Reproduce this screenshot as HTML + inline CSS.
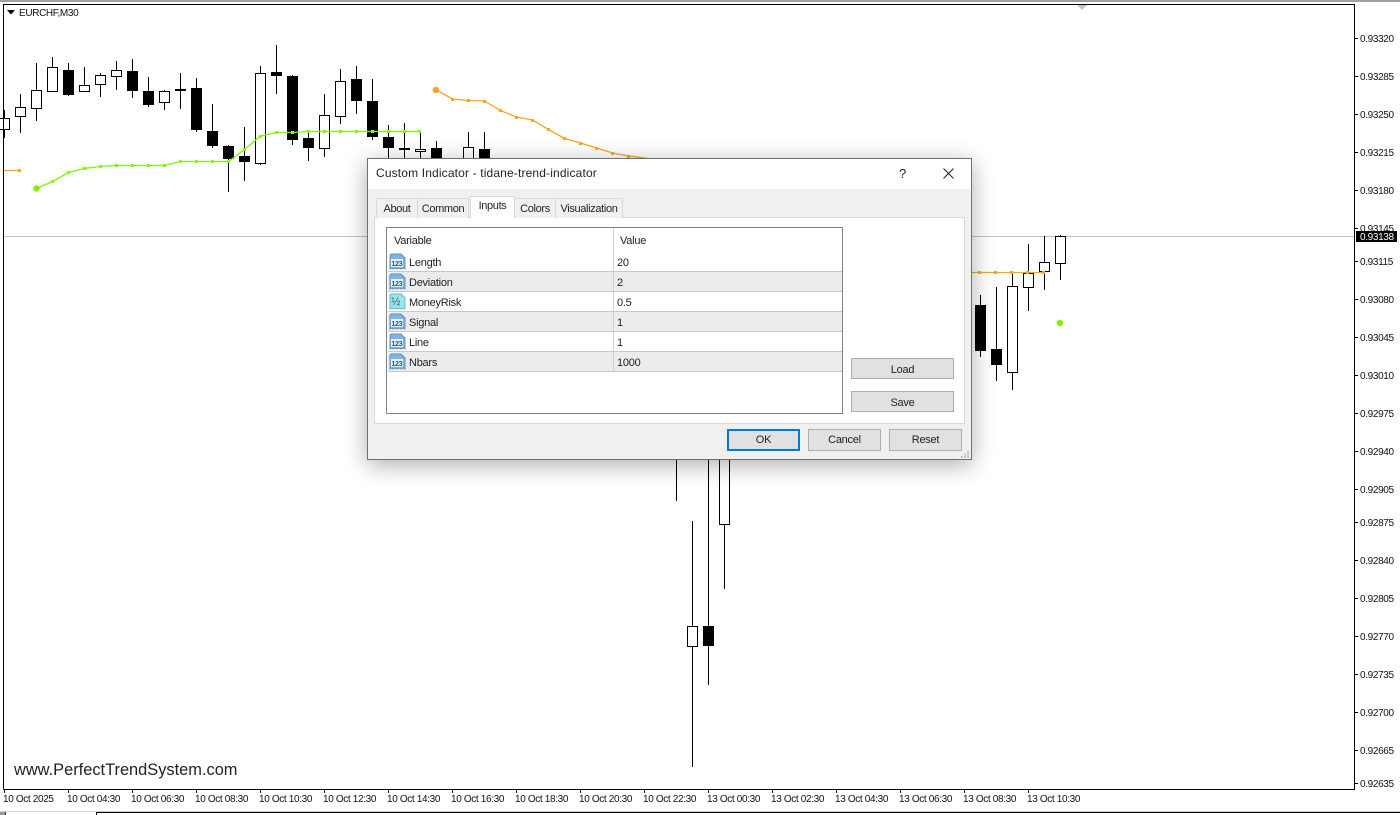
<!DOCTYPE html>
<html><head><meta charset="utf-8">
<style>
html,body{margin:0;padding:0;background:#fff;width:1400px;height:815px;overflow:hidden}
body{position:relative;font-family:"Liberation Sans",sans-serif}
svg.c{position:absolute;left:0;top:0}
.ax text{font:10px "Liberation Sans",sans-serif;letter-spacing:-.35px;fill:#111}
#d{position:absolute;left:367px;top:158px;width:603px;height:300px;background:#f0f0f0;border:1px solid #707070;box-shadow:0 5px 22px rgba(0,0,0,.32);font-size:11px;letter-spacing:-.25px;color:#222}
#d>*{position:absolute;box-sizing:border-box}
.ti{left:0;top:0;width:603px;height:30px;background:#fff}
.tt{left:8px;top:7px;font-size:12px;letter-spacing:.15px;white-space:nowrap}
.pn{left:6px;top:58px;width:591px;height:207px;background:#fff;border:1px solid #d9d9d9}
.tb{top:39px;height:20px;background:#f0f0f0;border:1px solid #d9d9d9;border-bottom:0;text-align:center;line-height:20px;white-space:nowrap;letter-spacing:-.35px}
.tb.a{top:37px;height:22px;background:#fff;z-index:2;line-height:18px}
.ls{left:18px;top:68px;width:457px;height:187px;background:#fff;border:1px solid #828282}
.ls>*{position:absolute;box-sizing:border-box}
.r{left:1px;width:454px;height:20px;border-bottom:1px solid #c8c8c8;line-height:19px}
.r.g{background:#ececec}
.r span{position:absolute;top:2px;white-space:nowrap}
.r .n{left:21px}.r .v{left:229px}
.r svg{position:absolute;left:1px;top:1px}
.vl{left:226px;top:0;width:1px;height:144px;background:#d0d0d0}
.bt{background:#e1e1e1;border:1px solid #adadad;text-align:center;line-height:21px;height:22px;width:73px;top:270px;white-space:nowrap}
</style></head><body>

<svg class="c" width="1400" height="815" viewBox="0 0 1400 815" shape-rendering="crispEdges">
<rect width="1400" height="2" fill="#a0a0a0"/>
<rect x="0" y="811" width="1400" height="1" fill="#d0d0d0"/>
<rect x="96" y="812" width="1304" height="1" fill="#000"/>
<rect x="96" y="812" width="1" height="3" fill="#000"/>
<rect x="0" y="812" width="5" height="3" fill="#999"/>
<rect x="5" y="812" width="1" height="3" fill="#333"/>
<path d="M1076 4h12l-6 6z" fill="#c4c4c4" shape-rendering="auto"/>
<rect x="3" y="236" width="1351" height="1" fill="#c0c0c0"/>
<path stroke="#000" fill="none" d="M4.5 110V138M20.5 94V133M36.5 63V121M52.5 57V91M68.5 63V96M84.5 67V91M100.5 73V97M116.5 61V90M132.5 59V98M148.5 77V107M164.5 90V110M180.5 73V109M196.5 78V132M212.5 104V148M228.5 145V192M244.5 127V181M260.5 66V165M276.5 45V94M292.5 75V145M308.5 130V161M324.5 94V157M340.5 69V124M356.5 66V114M372.5 79V140M388.5 125V165M404.5 123V165M420.5 133V165M436.5 141V165M468.5 132V165M484.5 132V165M676.5 455V501M692.5 521V767M708.5 455V685M724.5 455V589M980.5 295V357M996.5 287V381M1012.5 274V390M1028.5 244V311M1044.5 236V290M1060.5 235V280"/>
<g fill="#000">
<rect x="63" y="70" width="11" height="25"/><rect x="127" y="71" width="11" height="20"/><rect x="143" y="91" width="11" height="14"/><rect x="175" y="89" width="11" height="2"/><rect x="191" y="88" width="11" height="42"/><rect x="207" y="131" width="11" height="15"/><rect x="223" y="146" width="11" height="13"/><rect x="239" y="156" width="11" height="6"/><rect x="271" y="72" width="11" height="4"/><rect x="287" y="76" width="11" height="64"/><rect x="303" y="138" width="11" height="10"/><rect x="351" y="79" width="11" height="22"/><rect x="367" y="101" width="11" height="36"/><rect x="383" y="137" width="11" height="11"/><rect x="399" y="148" width="11" height="2"/><rect x="431" y="148" width="11" height="14"/><rect x="479" y="149" width="11" height="12"/><rect x="703" y="626" width="11" height="20"/><rect x="975" y="305" width="11" height="46"/><rect x="991" y="349" width="11" height="16"/>
</g>
<g fill="#fff" stroke="#000">
<rect x="-.5" y="118.500" width="10" height="11"/><rect x="15.500" y="107.500" width="10" height="9"/><rect x="31.500" y="90.500" width="10" height="18"/><rect x="47.500" y="67.500" width="10" height="24"/><rect x="79.500" y="85.500" width="10" height="6"/><rect x="95.500" y="75.500" width="10" height="9"/><rect x="111.500" y="70.500" width="10" height="6"/><rect x="159.500" y="91.500" width="10" height="11"/><rect x="255.500" y="73.500" width="10" height="90"/><rect x="319.500" y="115.500" width="10" height="33"/><rect x="335.500" y="81.500" width="10" height="35"/><rect x="415.500" y="149.500" width="10" height="2"/><rect x="463.500" y="147.500" width="10" height="14"/><rect x="687.500" y="626.500" width="10" height="20"/><rect x="719.500" y="455.500" width="10" height="69"/><rect x="1007.500" y="286.500" width="10" height="86"/><rect x="1023.500" y="273.500" width="10" height="14"/><rect x="1039.500" y="262.500" width="10" height="9"/><rect x="1055.500" y="236.500" width="10" height="27"/>
</g>
<g shape-rendering="auto" fill="none" stroke-width="1.300">
<path stroke="#85ee10" d="M36.500 188.500L52.500 181.500L68.500 172.500L84.500 168.500L100.500 166.500L116.500 165.500H164.500L180.500 161.500H228.500L244.500 149.500L260.500 136L276.500 132.500H292.500L308.500 131.500H420"/>
<path stroke="#f0a81e" d="M4 170.500H20.500M436.500 90L452.500 99L468.500 100.500L484.500 101L500.500 110.500L516.500 117L532.500 120L548.500 129.500L564.500 138.500L580.500 143L596.500 148L612.500 153L628.500 156L648 158.500M972 272.500H1044.500"/>
</g>
<g fill="#80ff00">
<rect x="51" y="180" width="3" height="3"/><rect x="67" y="171" width="3" height="3"/><rect x="83" y="167" width="3" height="3"/><rect x="99" y="165" width="3" height="3"/><rect x="115" y="164" width="3" height="3"/><rect x="131" y="164" width="3" height="3"/><rect x="147" y="164" width="3" height="3"/><rect x="163" y="164" width="3" height="3"/><rect x="179" y="160" width="3" height="3"/><rect x="195" y="160" width="3" height="3"/><rect x="211" y="160" width="3" height="3"/><rect x="227" y="160" width="3" height="3"/><rect x="243" y="148" width="3" height="3"/><rect x="259" y="135" width="3" height="3"/><rect x="275" y="131" width="3" height="3"/><rect x="291" y="131" width="3" height="3"/><rect x="307" y="130" width="3" height="3"/><rect x="323" y="130" width="3" height="3"/><rect x="339" y="130" width="3" height="3"/><rect x="355" y="130" width="3" height="3"/><rect x="371" y="130" width="3" height="3"/><rect x="387" y="130" width="3" height="3"/><rect x="403" y="130" width="3" height="3"/><rect x="418" y="130" width="3" height="3"/>
</g>
<g fill="#f5a623">
<rect x="18" y="169" width="3" height="3"/><rect x="451" y="98" width="3" height="3"/><rect x="467" y="99" width="3" height="3"/><rect x="483" y="100" width="3" height="3"/><rect x="499" y="109" width="3" height="3"/><rect x="515" y="116" width="3" height="3"/><rect x="531" y="119" width="3" height="3"/><rect x="547" y="128" width="3" height="3"/><rect x="563" y="137" width="3" height="3"/><rect x="579" y="142" width="3" height="3"/><rect x="595" y="147" width="3" height="3"/><rect x="611" y="152" width="3" height="3"/><rect x="627" y="155" width="3" height="3"/><rect x="978" y="271" width="3" height="3"/><rect x="994" y="271" width="3" height="3"/><rect x="1010" y="271" width="3" height="3"/><rect x="1026" y="271" width="3" height="3"/><rect x="1042" y="271" width="3" height="3"/>
</g>
<g shape-rendering="auto">
<circle cx="36.500" cy="188.500" r="3.200" fill="#80f000"/>
<circle cx="1060" cy="323" r="3.200" fill="#80f000"/>
<circle cx="436" cy="90" r="3.200" fill="#f5a623"/>
</g>
<!-- frame -->
<path fill="none" stroke="#000" d="M3.500 789.500V4.500H1354.500V789.500H3.500"/>
<path stroke="#000" d="M1354 38.500h4M1354 76.500h4M1354 114.500h4M1354 152.500h4M1354 190.500h4M1354 228.500h4M1354 261.500h4M1354 299.500h4M1354 337.500h4M1354 375.500h4M1354 413.500h4M1354 451.500h4M1354 489.500h4M1354 522.500h4M1354 560.500h4M1354 598.500h4M1354 636.500h4M1354 674.500h4M1354 712.500h4M1354 750.500h4M1354 783.500h4M4.500 789v4M68.500 789v4M132.500 789v4M196.500 789v4M260.500 789v4M324.500 789v4M388.500 789v4M452.500 789v4M516.500 789v4M580.500 789v4M644.500 789v4M708.500 789v4M772.500 789v4M836.500 789v4M900.500 789v4M964.500 789v4M1028.500 789v4"/>
<path d="M7 10h8l-4 4.500z" fill="#000" shape-rendering="auto"/>
<g class="ax">
<text x="19" y="16">EURCHF,M30</text>
<text x="1360" y="42">0.93320</text><text x="1360" y="80">0.93285</text><text x="1360" y="118">0.93250</text><text x="1360" y="156">0.93215</text><text x="1360" y="194">0.93180</text><text x="1360" y="232">0.93145</text><text x="1360" y="265">0.93115</text><text x="1360" y="303">0.93080</text><text x="1360" y="341">0.93045</text><text x="1360" y="379">0.93010</text><text x="1360" y="417">0.92975</text><text x="1360" y="455">0.92940</text><text x="1360" y="493">0.92905</text><text x="1360" y="526">0.92875</text><text x="1360" y="564">0.92840</text><text x="1360" y="602">0.92805</text><text x="1360" y="640">0.92770</text><text x="1360" y="678">0.92735</text><text x="1360" y="716">0.92700</text><text x="1360" y="754">0.92665</text><text x="1360" y="787">0.92635</text>
<rect x="1356" y="231" width="41" height="11" fill="#000"/>
<text x="1360" y="240" style="fill:#fff">0.93138</text>
<text x="3" y="802">10 Oct 2025</text><text x="67" y="802">10 Oct 04:30</text><text x="131" y="802">10 Oct 06:30</text><text x="195" y="802">10 Oct 08:30</text><text x="259" y="802">10 Oct 10:30</text><text x="323" y="802">10 Oct 12:30</text><text x="387" y="802">10 Oct 14:30</text><text x="451" y="802">10 Oct 16:30</text><text x="515" y="802">10 Oct 18:30</text><text x="579" y="802">10 Oct 20:30</text><text x="643" y="802">10 Oct 22:30</text><text x="707" y="802">13 Oct 00:30</text><text x="771" y="802">13 Oct 02:30</text><text x="835" y="802">13 Oct 04:30</text><text x="899" y="802">13 Oct 06:30</text><text x="963" y="802">13 Oct 08:30</text><text x="1027" y="802">13 Oct 10:30</text>
</g>
<text x="14" y="775" font-family="Liberation Sans" font-size="16.400" fill="#222" shape-rendering="auto">www.PerfectTrendSystem.com</text>
</svg>

<div id="d">
<div class="ti"></div>
<div class="tt">Custom Indicator - tidane-trend-indicator</div>
<div style="left:531px;top:7px;font-size:13px">?</div>
<svg style="left:575px;top:9px" width="11" height="11" viewBox="0 0 11 11"><path d="M.5.5L10.500 10.500M10.500.5L.5 10.500" stroke="#222" fill="none"/></svg>
<div class="pn"></div>
<div class="tb" style="left:8px;width:42px">About</div>
<div class="tb" style="left:49px;width:52px">Common</div>
<div class="tb a" style="left:102px;width:45px">Inputs</div>
<div class="tb" style="left:146px;width:42px">Colors</div>
<div class="tb" style="left:187px;width:68px">Visualization</div>
<div class="ls">
 <span style="left:7px;top:7px">Variable</span><span style="left:233px;top:7px">Value</span>
 <div class="r" style="top:24px"><svg width="17" height="17" viewBox="0 0 17 17"><path d="M1 3Q1 1 3 1H12L16 5V16L14 15L12 16L10 15L8 16L6 15L4 16L2 15L1 16Z" fill="#80b5e2" stroke="#5f95c4"/><rect x="2" y="6" width="12" height="8" fill="#eaf4fb"/><text x="2.500" y="12.800" font-family="Liberation Sans" font-size="7" font-weight="bold" fill="#1f4f86">123</text></svg><span class="n">Length</span><span class="v">20</span></div>
 <div class="r g" style="top:44px"><svg width="17" height="17" viewBox="0 0 17 17"><path d="M1 3Q1 1 3 1H12L16 5V16L14 15L12 16L10 15L8 16L6 15L4 16L2 15L1 16Z" fill="#80b5e2" stroke="#5f95c4"/><rect x="2" y="6" width="12" height="8" fill="#eaf4fb"/><text x="2.500" y="12.800" font-family="Liberation Sans" font-size="7" font-weight="bold" fill="#1f4f86">123</text></svg><span class="n">Deviation</span><span class="v">2</span></div>
 <div class="r" style="top:64px"><svg width="17" height="17" viewBox="0 0 17 17"><path d="M1 3Q1 1 3 1H12L16 5V16L14 15L12 16L10 15L8 16L6 15L4 16L2 15L1 16Z" fill="#9fe3ea" stroke="#63bcc8"/><text x="2.200" y="12" font-family="Liberation Sans" font-size="11" fill="#1f6a78">½</text></svg><span class="n">MoneyRisk</span><span class="v">0.5</span></div>
 <div class="r g" style="top:84px"><svg width="17" height="17" viewBox="0 0 17 17"><path d="M1 3Q1 1 3 1H12L16 5V16L14 15L12 16L10 15L8 16L6 15L4 16L2 15L1 16Z" fill="#80b5e2" stroke="#5f95c4"/><rect x="2" y="6" width="12" height="8" fill="#eaf4fb"/><text x="2.500" y="12.800" font-family="Liberation Sans" font-size="7" font-weight="bold" fill="#1f4f86">123</text></svg><span class="n">Signal</span><span class="v">1</span></div>
 <div class="r" style="top:104px"><svg width="17" height="17" viewBox="0 0 17 17"><path d="M1 3Q1 1 3 1H12L16 5V16L14 15L12 16L10 15L8 16L6 15L4 16L2 15L1 16Z" fill="#80b5e2" stroke="#5f95c4"/><rect x="2" y="6" width="12" height="8" fill="#eaf4fb"/><text x="2.500" y="12.800" font-family="Liberation Sans" font-size="7" font-weight="bold" fill="#1f4f86">123</text></svg><span class="n">Line</span><span class="v">1</span></div>
 <div class="r g" style="top:124px"><svg width="17" height="17" viewBox="0 0 17 17"><path d="M1 3Q1 1 3 1H12L16 5V16L14 15L12 16L10 15L8 16L6 15L4 16L2 15L1 16Z" fill="#80b5e2" stroke="#5f95c4"/><rect x="2" y="6" width="12" height="8" fill="#eaf4fb"/><text x="2.500" y="12.800" font-family="Liberation Sans" font-size="7" font-weight="bold" fill="#1f4f86">123</text></svg><span class="n">Nbars</span><span class="v">1000</span></div>
 <div class="vl"></div>
</div>
<div class="bt" style="left:483px;top:199px;width:103px;height:21px;line-height:22px">Load</div>
<div class="bt" style="left:483px;top:232px;width:103px;height:21px;line-height:22px">Save</div>
<div class="bt" style="left:359px;border:2px solid #0078d7;line-height:19px">OK</div>
<div class="bt" style="left:440px">Cancel</div>
<div class="bt" style="left:521px">Reset</div>
<svg style="left:593px;top:292px" width="8" height="7" viewBox="0 0 8 7" shape-rendering="crispEdges"><path fill="#c4c4c4" d="M6 0h2v2H6zM3 2.500h2v2H3zM6 2.500h2v2H6zM0 5h2v2H0zM3 5h2v2H3zM6 5h2v2H6z"/></svg>
</div>
</body></html>
